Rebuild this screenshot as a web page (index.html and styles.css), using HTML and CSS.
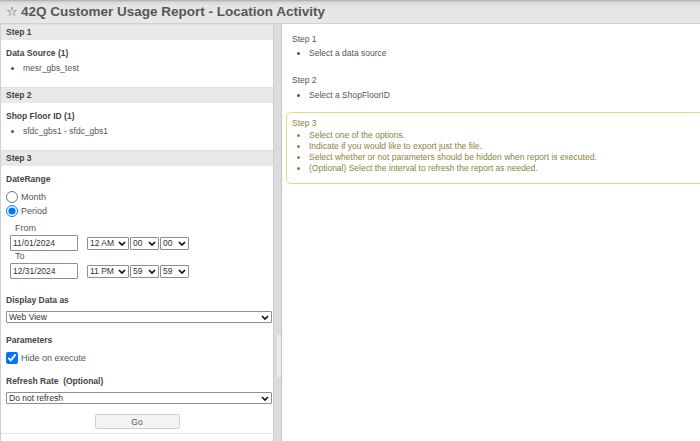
FILE: index.html
```html
<!DOCTYPE html>
<html>
<head>
<meta charset="utf-8">
<link rel="stylesheet" href="styles.css">
</head>
<body>
<div class="titlebar"><span class="star">☆</span><span class="title">42Q Customer Usage Report - Location Activity</span></div>
<div class="main">
  <div class="left">
    <div class="step-h">Step 1</div>
    <div class="sec">
      <div class="lbl">Data Source (1)</div>
      <ul class="items"><li>mesr_gbs_test</li></ul>
    </div>
    <div class="step-h">Step 2</div>
    <div class="sec">
      <div class="lbl">Shop Floor ID (1)</div>
      <ul class="items"><li>sfdc_gbs1 - sfdc_gbs1</li></ul>
    </div>
    <div class="step-h">Step 3</div>
    <div class="sec form">
      <div class="lbl">DateRange</div>
      <div class="opts">
        <label class="opt"><input type="radio" name="dr"><span>Month</span></label>
        <label class="opt"><input type="radio" name="dr" checked><span>Period</span></label>
      </div>
      <div class="range">
        <div class="rlbl">From</div>
        <div class="rrow">
          <input class="date" type="text" value="11/01/2024">
          <select class="hr"><option>12 AM</option></select>
          <select class="mn"><option>00</option></select>
          <select class="mn"><option>00</option></select>
        </div>
        <div class="rlbl">To</div>
        <div class="rrow">
          <input class="date" type="text" value="12/31/2024">
          <select class="hr"><option>11 PM</option></select>
          <select class="mn"><option>59</option></select>
          <select class="mn"><option>59</option></select>
        </div>
      </div>
      <div class="lbl gap-l">Display Data as</div>
      <select class="wide"><option>Web View</option></select>
      <div class="lbl gap-m">Parameters</div>
      <label class="opt chk"><input type="checkbox" checked><span>Hide on execute</span></label>
      <div class="lbl gap-s">Refresh Rate&nbsp; (Optional)</div>
      <select class="wide"><option>Do not refresh</option></select>
      <div class="go-row"><button class="go" type="button">Go</button></div>
    </div>
    <div class="bottom-line"></div>
  </div>
  <div class="splitter"><div class="handle"></div></div>
  <div class="right">
    <div class="help">
      <div class="help-t">Step 1</div>
      <ul class="hlist"><li>Select a data source</li></ul>
    </div>
    <div class="help second">
      <div class="help-t">Step 2</div>
      <ul class="hlist"><li>Select a ShopFloorID</li></ul>
    </div>
    <div class="help active">
      <div class="help-t">Step 3</div>
      <ul class="hlist tight">
        <li>Select one of the options.</li>
        <li>Indicate if you would like to export just the file.</li>
        <li>Select whether or not parameters should be hidden when report is executed.</li>
        <li>(Optional) Select the interval to refresh the report as needed.</li>
      </ul>
    </div>
  </div>
</div>
</body>
</html>
```
FILE: styles.css
```css
html, body {
  margin: 0;
  padding: 0;
  width: 700px;
  height: 441px;
  overflow: hidden;
  background: #fff;
  font-family: "Liberation Sans", Arial, sans-serif;
  font-size: 8.5px;
  color: #555;
}

.titlebar {
  box-sizing: border-box;
  height: 24px;
  display: flex;
  align-items: center;
  padding-left: 6px;
  background: linear-gradient(#a9a9a9 0px, #d6d6d6 2px, #e4e4e4 5px, #e8e8e8 100%);
  border-bottom: 1px solid #d2d2d2;
  color: #575757;
  font-weight: bold;
  font-size: 13.5px;
}

.star {
  font-weight: normal;
  font-size: 13px;
  margin-right: 3px;
  color: #555;
}

.main {
  display: flex;
  height: 417px;
}

.left {
  box-sizing: border-box;
  width: 274px;
  flex: none;
  border-left: 1px solid #cfcfcf;
  border-right: 1px solid #cfcfcf;
  display: flex;
  flex-direction: column;
}

.step-h {
  box-sizing: border-box;
  height: 16px;
  line-height: 15px;
  padding-left: 5px;
  background: #e8e8e8;
  border-top: 1px solid #e0e0e0;
  font-weight: bold;
  color: #444;
}

.sec {
  padding: 8px 5px 13px 5px;
}

.lbl {
  line-height: 11px;
  font-weight: bold;
  color: #444;
}

.items {
  margin: 4px 0 0 0;
  padding-left: 17px;
  line-height: 11px;
  color: #555;
}

.form {
  padding-bottom: 0;
  display: flex;
  flex-direction: column;
}

.opts {
  margin-top: 5px;
  display: flex;
  flex-direction: column;
}

.opt {
  display: flex;
  align-items: center;
  height: 14px;
  color: #555;
  font-size: 9px;
}

.opt input {
  width: 12px;
  height: 12px;
  margin: 0 3px 0 0;
}

.range {
  margin: 5px 0 0 4px;
  display: flex;
  flex-direction: column;
}

.rlbl {
  line-height: 11px;
  padding-left: 5px;
  font-size: 9px;
  color: #555;
}

.rrow {
  display: flex;
  align-items: center;
  gap: 1px;
  margin-top: 1px;
  height: 16px;
}

.date {
  box-sizing: border-box;
  width: 68px;
  height: 16px;
  margin: 0 8px 0 0;
  padding: 0 2px;
  border: 1px solid #8f8f8f;
  border-radius: 1px;
  font-family: inherit;
  font-size: 8.5px;
  color: #333;
}

select {
  -webkit-appearance: none;
  appearance: none;
  box-sizing: border-box;
  height: 13px;
  margin: 0;
  padding: 0 9px 0 2px;
  font-family: inherit;
  font-size: 8.5px;
  line-height: 11px;
  color: #333;
  border: 1px solid #8f8f8f;
  border-radius: 1px;
  background-color: #fff;
  background-image: url("data:image/svg+xml;utf8,<svg xmlns='http://www.w3.org/2000/svg' width='8' height='5' viewBox='0 0 8 5'><path d='M1 1 L4 4 L7 1' fill='none' stroke='%23111' stroke-width='1.7'/></svg>");
  background-repeat: no-repeat;
  background-position: right 2px center;
  background-size: 8px 5px;
}

.hr { width: 42px; }
.mn { width: 29px; }

.wide {
  width: 266px;
  height: 12px;
  margin-top: 5px;
}

.gap-l { margin-top: 16px; }
.gap-m { margin-top: 12px; }
.gap-s { margin-top: 11px; }

.chk {
  margin-top: 5px;
}

.go-row {
  display: flex;
  justify-content: center;
  margin-top: 10px;
}

.go {
  box-sizing: border-box;
  width: 85px;
  height: 15px;
  padding: 0;
  background: #f3f3f3;
  border: 1px solid #cfcfcf;
  border-radius: 2px;
  font-family: inherit;
  font-size: 8.5px;
  color: #555;
}

.bottom-line {
  margin-top: 4px;
  height: 1px;
  background: #e4e4e4;
}

.splitter {
  width: 7px;
  flex: none;
  background: #dcdcdc;
  display: flex;
  justify-content: center;
}

.handle {
  width: 4px;
  height: 42px;
  margin-top: 311px;
  margin-left: 2px;
  background: #ececec;
}

.right {
  flex: 1;
  min-width: 0;
  overflow: hidden;
  border-left: 1px solid #c4c4c4;
  padding: 10px 0 0 4px;
}

.help {
  padding-left: 6px;
  color: #555;
}

.help-t {
  line-height: 11px;
}

.hlist {
  margin: 3px 0 0 0;
  padding-left: 17px;
  line-height: 11px;
}

.second {
  margin-top: 16px;
}

.second .hlist {
  margin-top: 4px;
}

.active {
  margin-top: 11px;
  margin-right: -12px;
  padding: 5px 0 9px 5px;
  border: 1px solid #e2dc78;
  border-radius: 5px;
  color: #8b8440;
}

.active .hlist {
  margin-top: 1px;
}
```
